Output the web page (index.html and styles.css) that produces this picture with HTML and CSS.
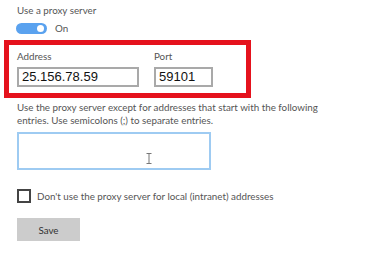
FILE: index.html
```html
<!DOCTYPE html>
<html>
<head>
<meta charset="utf-8">
<link rel="stylesheet" href="styles.css">
</head>
<body>
<div class="page">
  <div class="title">Use a proxy server</div>
  <div class="toggle-row">
    <span class="toggle"><span class="knob"></span></span>
    <span class="toggle-label">On</span>
  </div>
  <div class="highlight">
    <div class="field address">
      <div class="label">Address</div>
      <div class="input">25.156.78.59</div>
    </div>
    <div class="field port">
      <div class="label">Port</div>
      <div class="input">59101</div>
    </div>
  </div>
  <p class="desc">Use the proxy server except for addresses that start with the following entries. Use semicolons (;) to separate entries.</p>
  <div class="textarea">
    <svg class="ibeam" width="6" height="11" viewBox="0 0 6 11"><path d="M0.5 0.5h5M3 0.5v10M0.5 10.5h5" stroke="#777" stroke-width="1" fill="none"/></svg>
  </div>
  <div class="check-row">
    <span class="checkbox"></span>
    <span class="check-label">Don't use the proxy server for local (intranet) addresses</span>
  </div>
  <button class="save">Save</button>
</div>
</body>
</html>
```
FILE: styles.css
```css
html, body {
  margin: 0;
  padding: 0;
  background: #fff;
}
.page {
  width: 365px;
  height: 255px;
  overflow: hidden;
  font-family: Lato, "Noto Sans", sans-serif;
  font-size: 9.8px;
  color: #555;
  padding-top: 3px;
  box-sizing: border-box;
}
.title {
  margin-left: 17px;
  line-height: 14px;
}
.toggle-row {
  margin-left: 16px;
  margin-top: 5px;
  display: flex;
  align-items: center;
  height: 12px;
}
.toggle {
  width: 31px;
  height: 11px;
  border-radius: 6px;
  background: #5aa2ef;
  position: relative;
  display: inline-block;
}
.knob {
  position: absolute;
  right: 3px;
  top: 2px;
  width: 7px;
  height: 7px;
  border-radius: 50%;
  background: #fff;
}
.toggle-label {
  margin-left: 8px;
  color: #555;
}
.highlight {
  margin-left: 4px;
  margin-top: 6px;
  width: 247px;
  height: 58px;
  box-sizing: border-box;
  border: 5px solid #e5121d;
  display: flex;
  padding: 5px 0 0 8px;
}
.field .label {
  line-height: 12px;
  color: #555;
}
.input {
  margin-top: 5px;
  height: 20px;
  box-sizing: border-box;
  border: 2px solid #a9a9a9;
  font-family: "Liberation Sans", Arial, sans-serif;
  font-size: 13px;
  color: #111;
  line-height: 16px;
  padding-left: 3px;
}
.address .input {
  width: 122px;
}
.port {
  margin-left: 15px;
}
.port .input {
  width: 59px;
}
.desc {
  margin: 3px 0 0 17px;
  width: 305px;
  line-height: 13px;
}
.textarea {
  margin: 5px 0 0 17px;
  width: 194px;
  height: 38px;
  box-sizing: border-box;
  border: 2px solid #9ecbf2;
  position: relative;
}
.ibeam {
  position: absolute;
  left: 127px;
  top: 19px;
}
.check-row {
  margin: 19px 0 0 17px;
  display: flex;
  align-items: center;
}
.checkbox {
  width: 14px;
  height: 14px;
  box-sizing: border-box;
  border: 2px solid #444;
  display: inline-block;
}
.check-label {
  margin-left: 6px;
  color: #555;
}
.save {
  margin: 15px 0 0 17px;
  width: 63px;
  height: 23px;
  border: none;
  background: #cccccc;
  font-family: Lato, "Noto Sans", sans-serif;
  font-size: 9.8px;
  color: #333;
  padding: 0;
  display: block;
}
```
